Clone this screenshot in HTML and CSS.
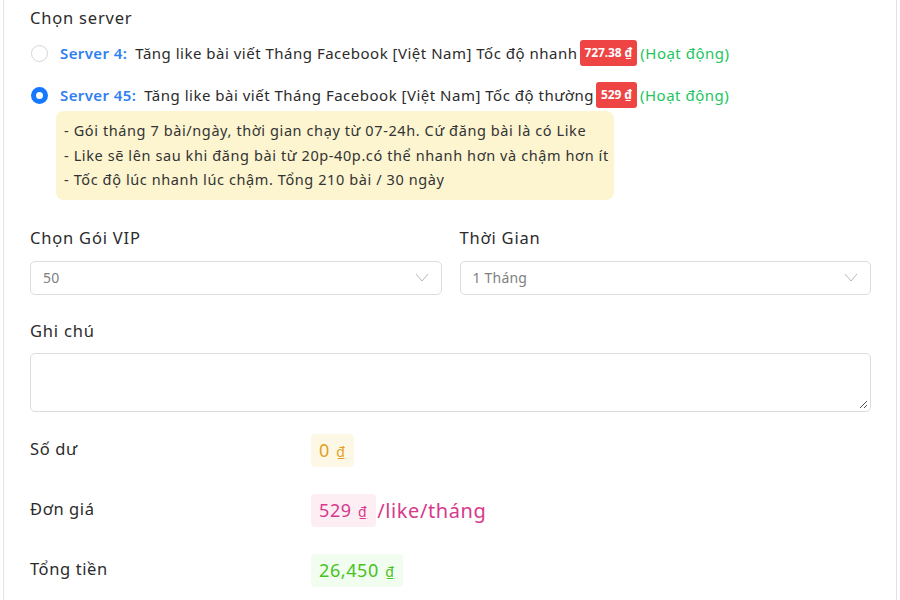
FILE: index.html
```html
<!DOCTYPE html>
<html lang="vi">
<head>
<meta charset="utf-8">
<link rel="stylesheet" href="styles.css">
</head>
<body>
<div class="card">
  <div class="label first">Chọn server</div>
  <div class="server">
    <span class="radio"></span>
    <span class="sname">Server 4:</span>
    <span class="sdesc">Tăng like bài viết Tháng Facebook [Việt Nam] Tốc độ nhanh</span>
    <span class="badge">727.38 ₫</span>
    <span class="status">(Hoạt động)</span>
  </div>
  <div class="server">
    <span class="radio checked"></span>
    <span class="sname">Server 45:</span>
    <span class="sdesc">Tăng like bài viết Tháng Facebook [Việt Nam] Tốc độ thường</span>
    <span class="badge">529 ₫</span>
    <span class="status">(Hoạt động)</span>
  </div>
  <div class="note">
    <div>- Gói tháng 7 bài/ngày, thời gian chạy từ 07-24h. Cứ đăng bài là có Like</div>
    <div>- Like sẽ lên sau khi đăng bài từ 20p-40p.có thể nhanh hơn và chậm hơn ít</div>
    <div>- Tốc độ lúc nhanh lúc chậm. Tổng 210 bài / 30 ngày</div>
  </div>
  <div class="row2">
    <div class="col">
      <div class="label">Chọn Gói VIP</div>
      <div class="select"><span>50</span><svg width="14" height="9" viewBox="0 0 14 9"><path d="M1 1l6 7 6-7" fill="none" stroke="#b8b8b8" stroke-width="1"/></svg></div>
    </div>
    <div class="col">
      <div class="label">Thời Gian</div>
      <div class="select"><span>1 Tháng</span><svg width="14" height="9" viewBox="0 0 14 9"><path d="M1 1l6 7 6-7" fill="none" stroke="#b8b8b8" stroke-width="1"/></svg></div>
    </div>
  </div>
  <div class="label">Ghi chú</div>
  <div class="textarea"><svg class="grip" width="9" height="9" viewBox="0 0 9 9"><path d="M8 1L1 8M8 5L5 8" stroke="#555" stroke-width="1"/></svg></div>
  <div class="sum">
    <div class="srow"><span class="skey">Số dư</span><span class="val orange">0 <u>₫</u></span></div>
    <div class="srow"><span class="skey">Đơn giá</span><span class="val pink">529 <u>₫</u></span><span class="unit">/like/tháng</span></div>
    <div class="srow"><span class="skey">Tổng tiền</span><span class="val green">26,450 <u>₫</u></span></div>
  </div>
</div>
</body>
</html>
```
FILE: styles.css
```css
* { box-sizing: border-box; }
html, body { margin: 0; background: #fff; }
body { font-family: "Noto Sans", "Open Sans", sans-serif; color: #2b2b2b; letter-spacing: 0.6px; }
.card {
  margin-left: 3px;
  width: 894px;
  height: 600px;
  border-left: 1px solid #e3e3e3;
  border-right: 1px solid #e3e3e3;
  padding: 6px 25px 0 26px;
  overflow: hidden;
}
.label { font-size: 16.5px; line-height: 24px; color: #2b2b2b; letter-spacing: 0.8px; }
.server {
  display: flex;
  align-items: center;
  height: 26px;
  margin-top: 10px;
  font-size: 15px;
  white-space: nowrap;
}
.server + .server { margin-top: 16px; }
.radio {
  width: 17px; height: 17px; border-radius: 50%;
  border: 1px solid #d6d6d6; background: #fff;
  margin-left: 1px; margin-right: 12px; flex: none;
}
.radio.checked { border: 5px solid #1677ff; }
.sname { color: #2f7ff0; font-weight: 600; margin-right: 8px; letter-spacing: 0.4px; }
.sdesc { color: #2b2b2b; margin-right: 2px; letter-spacing: 0.5px; }
.badge {
  background: #ef4444; color: #fff; font-size: 12px; font-weight: 700;
  border-radius: 3px; padding: 0 5px; height: 26px; line-height: 26px;
  margin-right: 3px; letter-spacing: -0.1px;
}
.status { color: #22c55e; letter-spacing: 0.5px; }
.note {
  margin: 3px 0 0 26px;
  width: 558px;
  background: #fcf5d0;
  border-radius: 8px;
  padding: 7px 8px 8px;
  font-size: 14.5px;
  line-height: 24.5px;
  color: #333;
  white-space: nowrap;
}
.row2 { display: flex; gap: 18px; margin-top: 26px; }
.col { flex: 1; }
.select {
  margin-top: 11px;
  height: 34px;
  border: 1px solid #dcdcdc;
  border-radius: 5px;
  display: flex; align-items: center; justify-content: space-between;
  padding: 0 12px 0 12px;
  font-size: 14px; color: #808080; letter-spacing: 0.2px;
}
.row2 + .label { margin-top: 24px; }
.textarea {
  position: relative;
  margin-top: 10px;
  height: 59px;
  border: 1px solid #dcdcdc;
  border-radius: 5px;
}
.grip { position: absolute; right: 2px; bottom: 2px; }
.sum { margin-top: 22px; }
.srow { display: flex; align-items: center; height: 33px; margin-bottom: 27px; }
.skey { width: 281px; font-size: 16.5px; margin-top: -4px; }
.val {
  height: 33px; line-height: 33px; padding: 0 9px 0 8px; border-radius: 4px;
  font-size: 18px;
}
.val u { font-size: 14px; margin-left: 1px; }
.orange { background: #fdf8e6; color: #e3a01b; }
.pink { background: #fdeef4; color: #d63a8c; }
.green { background: #f1fdef; color: #47c21f; }
.unit { color: #d63a8c; font-size: 20px; margin-left: 1px; }
```
